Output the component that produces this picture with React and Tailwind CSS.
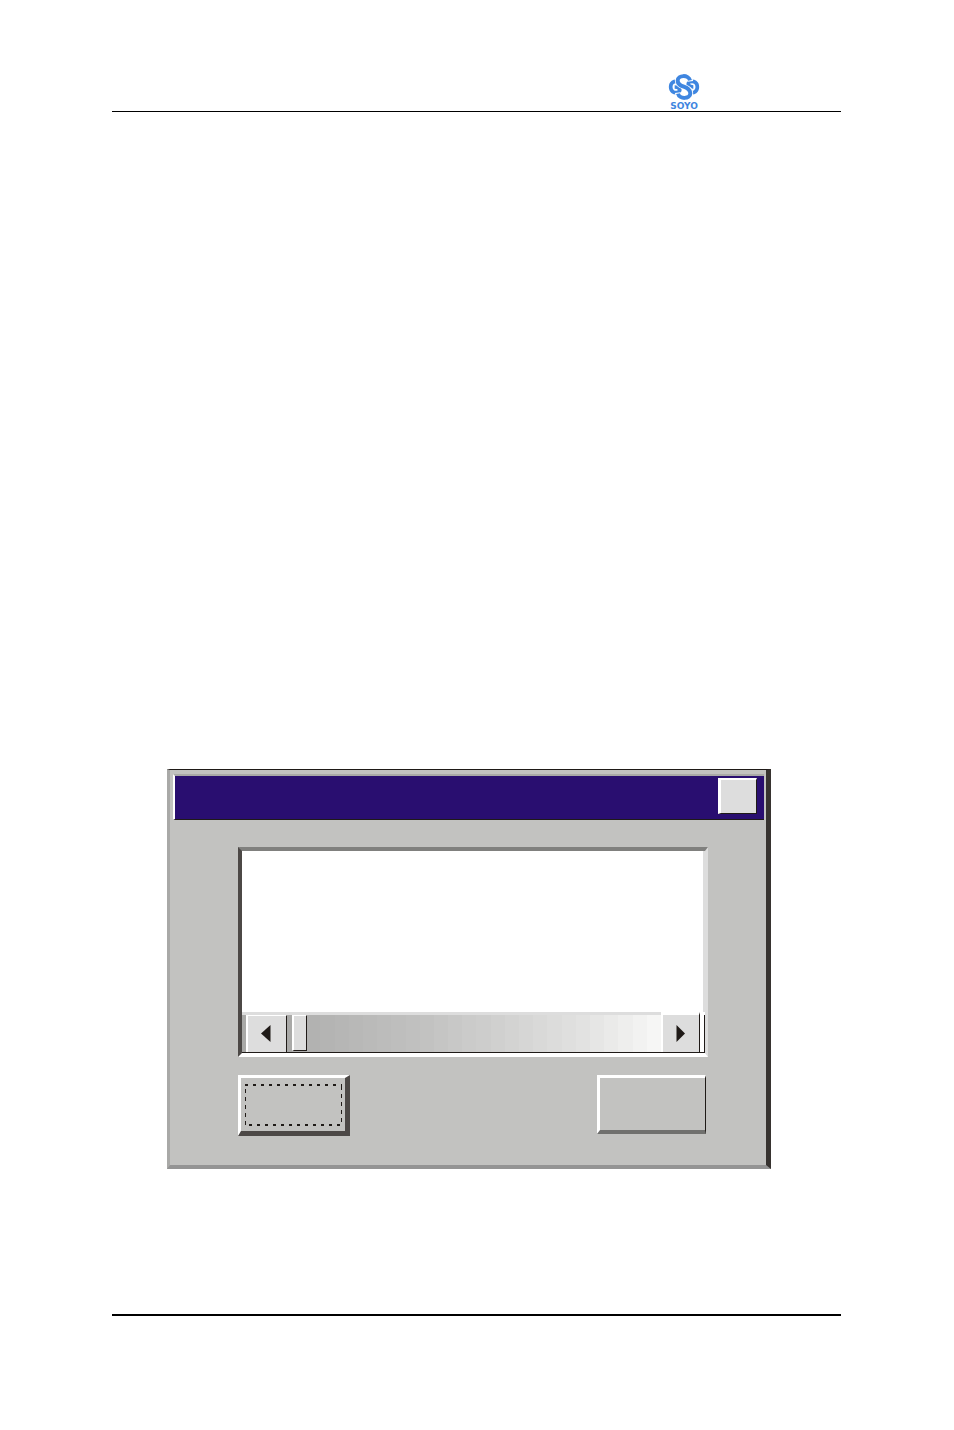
import React from 'react';

// grey levels of the scroll track, left to right
const trackShades = [
  174, 178, 180, 182, 184, 186, 188, 190, 192, 194, 197, 200, 203,
  205, 208, 211, 214, 217, 220, 223, 226, 230, 234, 238, 242, 246,
];

const trackGradient = `linear-gradient(to right, ${trackShades
  .map((shade, i) => {
    const start = (i / trackShades.length) * 100;
    const end = ((i + 1) / trackShades.length) * 100;
    return `rgb(${shade} ${shade} ${shade - 1}) ${start}% ${end}%`;
  })
  .join(', ')})`;

const Logo = () => (
  <a href="#" className="flex w-8 flex-col items-center text-[#3f86e0]">
    <svg viewBox="0 0 96 84" className="h-7 w-8" fill="none" aria-hidden="true">
      <g stroke="currentColor" strokeWidth="11">
        <path d="M30 26C18 22 8 30 8 42C8 54 18 62 30 58C40 53 36 42 20 42" />
        <path d="M66 58C78 62 88 54 88 42C88 30 78 22 66 26C56 31 60 42 76 42" />
      </g>
      <path d="M67 25C64 4 29 4 29 23C29 45 67 37 67 61C67 80 32 80 29 59" stroke="white" strokeWidth="17" />
      <path d="M66 22C62 5 29 5 29 23C29 45 67 37 67 61C67 79 34 79 30 62" stroke="currentColor" strokeWidth="12" />
    </svg>
    <span className="font-['DejaVu_Sans',sans-serif] text-[9px] leading-[10px] font-bold">SOYO</span>
  </a>
);

const TitleBar = () => (
  <header className="flex h-[46px] items-start justify-end border-t-2 border-b border-l-2 border-t-[#a9a9a7] border-b-[#1f1a17] border-l-white bg-[#290e70] pt-[2px] pr-[7px]">
    <button
      type="button"
      aria-label="Close"
      className="h-9 w-[39px] border-t-2 border-r border-b border-l-3 border-t-white border-r-[#1f1a17] border-b-[#1f1a17] border-l-white bg-[#dddddd]"
    />
  </header>
);

const ScrollBar = () => (
  <div className="flex h-[41px] border-b border-[#1f1a17] bg-white">
    <div className="flex flex-1 border-t-3 border-[#dddddd] bg-[#a9a9a7] pl-1">
      <button
        type="button"
        aria-label="Scroll left"
        className="mr-[5px] flex w-[41px] items-center justify-center border-t border-r border-l-2 border-t-white border-r-[#1f1a17] border-l-white bg-[#dddddd]"
      >
        <svg viewBox="0 0 12 18" className="h-[18px] w-3" fill="#1f1a17" aria-hidden="true">
          <path d="M9.500 0V17L0 8.500Z" />
        </svg>
      </button>
      <input
        type="range"
        min="0"
        max="100"
        defaultValue="0"
        aria-label="Scroll position"
        style={{ backgroundImage: trackGradient }}
        className="flex h-full min-w-0 flex-1 appearance-none items-start [&::-webkit-slider-runnable-track]:h-full [&::-webkit-slider-thumb]:h-9 [&::-webkit-slider-thumb]:w-[15px] [&::-webkit-slider-thumb]:appearance-none [&::-webkit-slider-thumb]:border-t [&::-webkit-slider-thumb]:border-r [&::-webkit-slider-thumb]:border-b [&::-webkit-slider-thumb]:border-l-2 [&::-webkit-slider-thumb]:border-t-white [&::-webkit-slider-thumb]:border-r-[#1f1a17] [&::-webkit-slider-thumb]:border-b-[#1f1a17] [&::-webkit-slider-thumb]:border-l-white [&::-webkit-slider-thumb]:bg-[#dddddd]"
      />
    </div>
    <button
      type="button"
      aria-label="Scroll right"
      className="flex w-[39px] items-center justify-center border-t-3 border-r border-l-2 border-t-white border-r-[#1f1a17] border-l-white bg-[#dddddd]"
    >
      <svg viewBox="0 0 10 18" className="h-[18px] w-[10px]" fill="#1f1a17" aria-hidden="true">
        <path d="M0.500 0V17L9 8.500Z" />
      </svg>
    </button>
    <div className="mt-[3px] w-[5px] border-r border-[#1f1a17]" />
  </div>
);

const Dialog = () => (
  <section
    role="dialog"
    aria-label="Setup"
    className="mt-[657px] mr-[70px] ml-[55px] border-t border-r-5 border-b-4 border-l-3 border-t-[#1f1a17] border-r-[#373330] border-b-[#949494] border-l-[#a9a9a7] bg-[#c2c2c0]"
  >
    <div className="pt-1 pr-[2px] pl-[3px]">
      <TitleBar />
    </div>
    <div className="pt-[27px] pr-[58px] pb-[29px] pl-[68px]">
      <div className="border-t-4 border-r-3 border-b-4 border-l-4 border-t-[#80807e] border-r-[#dddddd] border-b-white border-l-[#4c4846]">
        <textarea
          aria-label="Message"
          className="block h-[161px] w-full resize-none border-r-2 border-[#dddddd] bg-white outline-none"
        />
        <ScrollBar />
      </div>
      <div className="mt-[18px] flex items-start justify-between pr-[2px]">
        <button
          type="button"
          aria-label="OK"
          className="flex h-[61px] w-28 items-center justify-center border-t-3 border-r-5 border-b-5 border-l-3 border-t-white border-r-[#4c4846] border-b-[#4c4846] border-l-white"
        >
          {/* focus ring */}
          <svg viewBox="0 0 97 42" className="h-[42px] w-[97px]" stroke="#1f1a17" aria-hidden="true">
            <path d="M0 1H97M4 41H97" strokeWidth="2" strokeDasharray="3 5" />
            <path d="M0.500 5V42M96.500 2V40" strokeDasharray="4 4" />
          </svg>
        </button>
        <button
          type="button"
          aria-label="Cancel"
          className="h-[59px] w-[109px] border-t-3 border-r border-b-4 border-l-3 border-t-white border-r-[#1f1a17] border-b-[#70706e] border-l-white"
        />
      </div>
    </div>
  </section>
);

const App = () => (
  <div className="min-h-screen bg-white pr-[113px] pb-[114px] pl-28">
    <header className="flex justify-end border-b border-black pt-[73px] pr-[141px]">
      <Logo />
    </header>
    <main>
      <Dialog />
    </main>
    <footer className="mt-[145px] border-t-2 border-black" />
  </div>
);

export default App;
